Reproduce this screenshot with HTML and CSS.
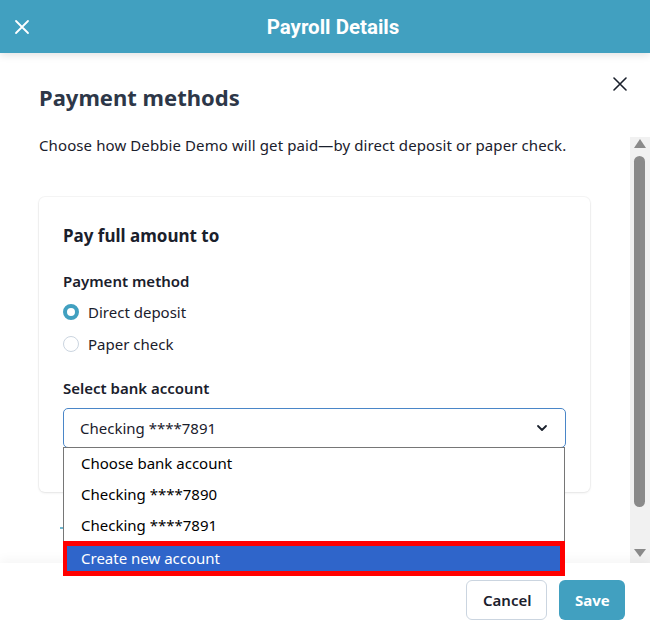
FILE: index.html
```html
<!DOCTYPE html>
<html>
<head>
<meta charset="utf-8">
<link rel="stylesheet" href="styles.css">
</head>
<body>
<div class="app">
  <header class="topbar">
    <span class="topbar-close">
      <svg width="16" height="16" viewBox="0 0 16 16"><path d="M2 2L14 14M14 2L2 14" stroke="#fff" stroke-width="1.8" stroke-linecap="round"/></svg>
    </span>
    <h1 class="topbar-title">Payroll Details</h1>
  </header>
  <main class="panel">
    <div class="panel-head">
      <h2 class="panel-title">Payment methods</h2>
      <span class="panel-close">
        <svg width="14" height="14" viewBox="0 0 14 14"><path d="M1 1L13 13M13 1L1 13" stroke="#1a202c" stroke-width="1.6" stroke-linecap="round"/></svg>
      </span>
    </div>
    <div class="scroll">
      <div class="scroll-content">
        <p class="intro">Choose how Debbie Demo will get paid—by direct deposit or paper check.</p>
        <section class="card">
          <h3 class="card-title">Pay full amount to</h3>
          <div class="field-label">Payment method</div>
          <div class="radio-list">
            <div class="radio-row"><span class="radio checked"></span><span>Direct deposit</span></div>
            <div class="radio-row"><span class="radio"></span><span>Paper check</span></div>
          </div>
          <div class="field-label bank-label">Select bank account</div>
          <div class="select-wrap">
            <div class="select">
              <span>Checking ****7891</span>
              <svg width="12" height="8" viewBox="0 0 12 8"><path d="M2 2L6 6L10 2" fill="none" stroke="#1a202c" stroke-width="1.8" stroke-linecap="round" stroke-linejoin="round"/></svg>
            </div>
            <ul class="dropdown">
              <li>Choose bank account</li>
              <li>Checking ****7890</li>
              <li>Checking ****7891</li>
              <li class="active">Create new account</li>
            </ul>
          </div>
        </section>
        <div class="add-link">
          <svg width="10" height="10" viewBox="0 0 10 10"><path d="M1 5H9M5 1V9" stroke="#41a0c0" stroke-width="1.6"/></svg>
        </div>
      </div>
      <div class="scrollbar">
        <span class="arrow up"></span>
        <span class="thumb"></span>
        <span class="arrow down"></span>
      </div>
    </div>
  </main>
  <footer class="footer">
    <button class="btn btn-cancel">Cancel</button>
    <button class="btn btn-save">Save</button>
  </footer>
</div>
</body>
</html>
```
FILE: styles.css
```css
* { box-sizing: border-box; }
html, body { margin: 0; padding: 0; }
body {
  width: 650px;
  height: 632px;
  overflow: hidden;
  background: #fff;
  font-family: "Noto Sans", "Open Sans", sans-serif;
  color: #1a202c;
}
.app { display: flex; flex-direction: column; height: 632px; }
.topbar {
  height: 53px;
  flex: none;
  background: #41a0c0;
  display: flex;
  align-items: center;
  position: relative;
  z-index: 2;
  box-shadow: 0 2px 8px rgba(0,0,0,0.12);
}
.topbar-close { width: 16px; height: 16px; margin-left: 14px; display: flex; }
.topbar-title {
  margin: 0 0 0 -30px;
  flex: 1;
  text-align: center;
  font-family: Roboto, sans-serif;
  font-weight: 700;
  font-size: 20.5px;
  color: #fff;
  padding-left: 16px;
}
.panel { flex: 1; display: flex; flex-direction: column; min-height: 0; }
.panel-head {
  display: flex;
  justify-content: space-between;
  padding: 24px 23px 0 39px;
  height: 84px;
}
.panel-title {
  margin: 5px 0 0;
  font-size: 22px;
  font-weight: 700;
  color: #2d3748;
  line-height: 30px;
}
.panel-close { width: 14px; height: 14px; display: flex; }
.scroll { flex: 1; display: flex; min-height: 0; }
.scroll-content { flex: 1; padding: 0 40px 0 39px; }
.intro {
  margin: -2px 0 0;
  font-size: 15px;
  line-height: 20px;
  letter-spacing: 0.1px;
  color: #1a202c;
}
.card {
  margin-top: 42px;
  width: 551px;
  height: 295px;
  border-radius: 6px;
  box-shadow: 0 0 0 1px rgba(0,0,0,0.035), 0 1px 3px rgba(0,0,0,0.08);
  padding: 26px 24px 0;
  background: #fff;
}
.card-title { margin: 0; font-size: 17px; font-weight: 700; line-height: 26px; color: #1a202c; }
.field-label { margin-top: 20px; font-size: 15px; font-weight: 600; line-height: 24px; color: #1a202c; }
.radio-list { display: flex; flex-direction: column; gap: 8px; margin-top: 7px; }
.radio-row { display: flex; align-items: center; gap: 9px; font-size: 15px; line-height: 24px; }
.radio {
  width: 16px; height: 16px;
  border-radius: 50%;
  border: 1.5px solid #cbd5e0;
  background: #fff;
}
.radio.checked { border: 4.5px solid #41a0c0; }
.bank-label { margin-top: 20px; }
.select-wrap { position: relative; margin-top: 8px; width: 503px; }
.select {
  height: 40px;
  border: 1.5px solid #4a86c8;
  border-radius: 5px;
  display: flex;
  align-items: center;
  justify-content: space-between;
  padding: 0 17px 0 16px;
  font-size: 15px;
}
.dropdown {
  position: absolute;
  left: 0;
  top: 39px;
  width: 502px;
  margin: 0;
  padding: 0;
  list-style: none;
  background: #fff;
  border: 1px solid #767676;
  border-bottom: none;
  z-index: 5;
  font-size: 15px;
}
.dropdown li { height: 31px; line-height: 31px; padding-left: 17px; color: #000; }
.dropdown li.active {
  background: #2f65ca;
  color: #fff;
  height: 35px;
  line-height: 24px;
  border: solid #ff0000;
  border-width: 5px 5px 5px 4px;
  margin: 0 -1px 0 -1px;
  padding-left: 14px;
}
.add-link { margin-top: 31px; margin-left: 20px; height: 10px; display: flex; }
.scrollbar {
  width: 20px;
  flex: none;
  background: #f1f1f1;
  display: flex;
  flex-direction: column;
  align-items: center;
  padding: 2px 1px 0 0;
}
.arrow { width: 0; height: 0; border-left: 6.5px solid transparent; border-right: 6.5px solid transparent; }
.arrow.up { border-bottom: 9px solid #8a8a8a; }
.arrow.down { border-top: 8px solid #8a8a8a; margin-top: 42px; }
.thumb { width: 11px; height: 351px; margin-top: 8px; background: #8a8a8a; border-radius: 5.5px; }
.footer {
  height: 69px;
  flex: none;
  display: flex;
  justify-content: flex-end;
  gap: 12px;
  padding: 17px 25px 0 0;
  background: #fff;
  box-shadow: 0 -4px 10px rgba(0,0,0,0.04);
  position: relative;
  z-index: 1;
}
.btn {
  height: 40px;
  border-radius: 6px;
  font-family: "Noto Sans", sans-serif;
  font-size: 15px;
  font-weight: 600;
  padding: 0 16px;
}
.btn-cancel { width: 81px; background: #fff; border: 1px solid #cbd5e0; color: #1a202c; }
.btn-save { width: 66px; background: #41a0c0; border: none; color: #fff; font-weight: 700; }
```
